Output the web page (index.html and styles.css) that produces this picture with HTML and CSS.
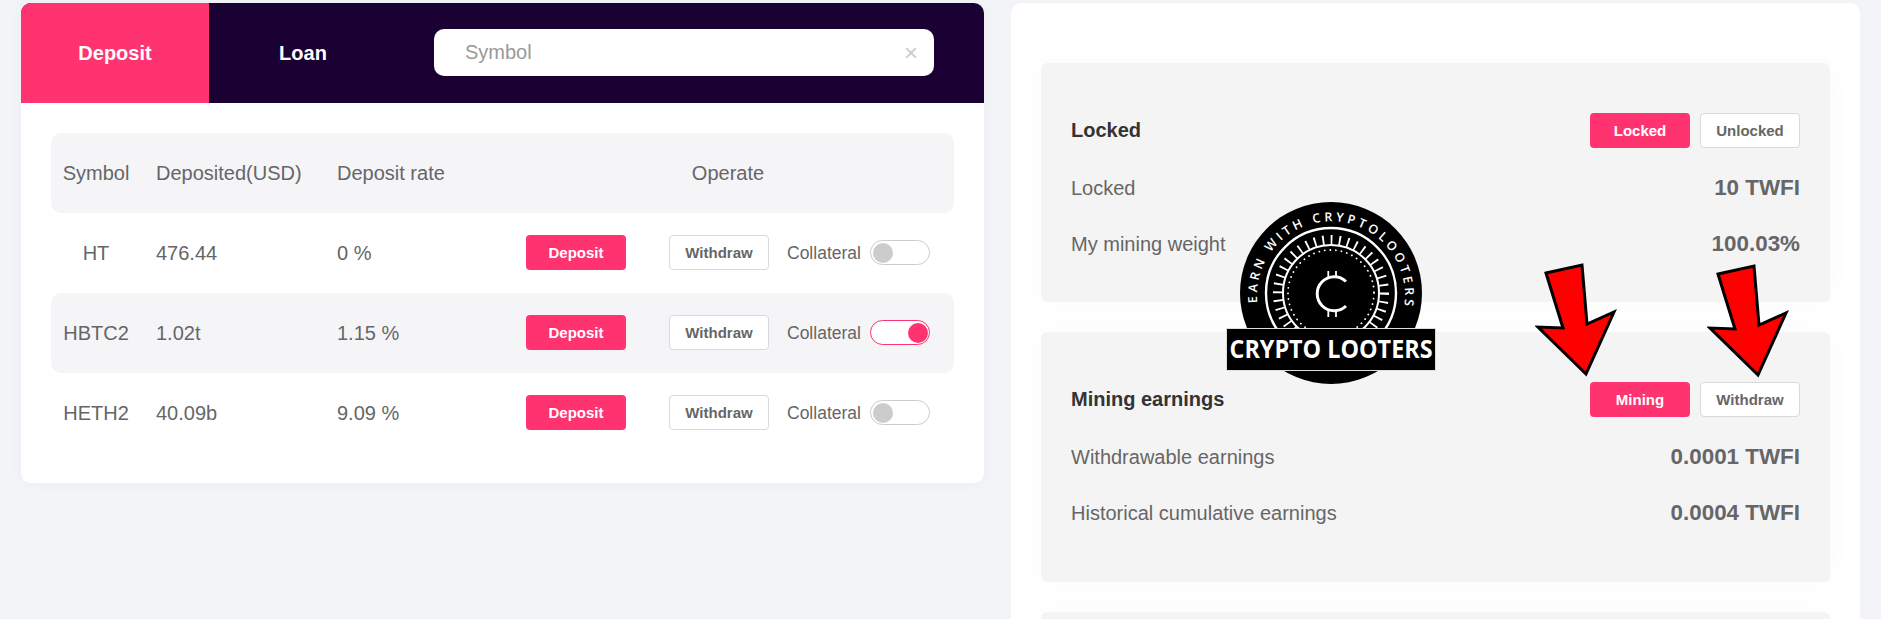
FILE: index.html
```html
<!DOCTYPE html>
<html lang="en">
<head>
<meta charset="utf-8">
<title>Deposit</title>
<link rel="stylesheet" href="styles.css">
</head>
<body>
<div class="page">
  <section class="market">
    <header class="market-head">
      <div class="tab tab-active">Deposit</div>
      <div class="tab">Loan</div>
      <div class="search"><span class="search-text">Symbol</span><span class="search-clear">×</span></div>
    </header>
    <div class="table">
      <div class="row row-shade row-head">
        <div class="cell-symbol">Symbol</div><div>Deposited(USD)</div><div>Deposit rate</div><div class="cell-operate">Operate</div>
      </div>
      <div class="row">
        <div class="cell-symbol">HT</div><div>476.44</div><div>0 %</div>
        <div class="ops"><button class="btn btn-pink">Deposit</button><button class="btn btn-white btn-gap">Withdraw</button><span class="coll">Collateral</span><span class="toggle"><span class="knob"></span></span></div>
      </div>
      <div class="row row-shade">
        <div class="cell-symbol">HBTC2</div><div>1.02t</div><div>1.15 %</div>
        <div class="ops"><button class="btn btn-pink">Deposit</button><button class="btn btn-white btn-gap">Withdraw</button><span class="coll">Collateral</span><span class="toggle toggle-on"><span class="knob"></span></span></div>
      </div>
      <div class="row">
        <div class="cell-symbol">HETH2</div><div>40.09b</div><div>9.09 %</div>
        <div class="ops"><button class="btn btn-pink">Deposit</button><button class="btn btn-white btn-gap">Withdraw</button><span class="coll">Collateral</span><span class="toggle"><span class="knob"></span></span></div>
      </div>
    </div>
  </section>

  <section class="side">
    <div class="panel panel-locked">
      <div class="panel-head"><h2 class="panel-title">Locked</h2><div class="panel-btns"><button class="btn btn-pink">Locked</button><button class="btn btn-white">Unlocked</button></div></div>
      <div class="stat"><span>Locked</span><b>10 TWFI</b></div>
      <div class="stat"><span>My mining weight</span><b>100.03%</b></div>
    </div>
    <div class="panel panel-earn">
      <div class="panel-head"><h2 class="panel-title">Mining earnings</h2><div class="panel-btns"><button class="btn btn-pink">Mining</button><button class="btn btn-white">Withdraw</button></div></div>
      <div class="stat"><span>Withdrawable earnings</span><b>0.0001 TWFI</b></div>
      <div class="stat"><span>Historical cumulative earnings</span><b>0.0004 TWFI</b></div>
    </div>
    <div class="panel panel-next"></div>
  </section>

  <svg class="logo" width="212" height="186" viewBox="0 0 212 186">
    <defs><path id="logo-arc" d="M31.4 101 A74 74 0 1 1 178.6 101"/></defs>
    <circle cx="105" cy="91" r="91" fill="#000"/>
    <text class="logo-arc-text"><textPath href="#logo-arc" textLength="250" lengthAdjust="spacing">EARN WITH CRYPTOLOOTERS</textPath></text>
    <circle cx="105" cy="91" r="65" fill="none" stroke="#fff" stroke-width="2.4"/>
    <circle cx="105" cy="91" r="48" fill="none" stroke="#fff" stroke-width="2"/>
    <circle cx="105" cy="91" r="53" fill="none" stroke="#fff" stroke-width="10" stroke-dasharray="1.8 6.5"/>
    <circle cx="105" cy="91" r="43" fill="none" stroke="#fff" stroke-width="1.8" stroke-linecap="round" stroke-dasharray="0.1 5.5"/>
    <path d="M120 79.5 A17 17 0 1 0 120 104" fill="none" stroke="#fff" stroke-width="3"/>
    <path d="M102.3 69 V76 M110 69 V76 M102.3 108 V115 M110 108 V115" stroke="#fff" stroke-width="1.8" fill="none"/>
    <rect x="0.5" y="126.5" width="209" height="42" fill="#000" stroke="#ddd"/>
    <text class="logo-name" x="105" y="156" text-anchor="middle" textLength="203" lengthAdjust="spacingAndGlyphs">CRYPTO LOOTERS</text>
  </svg>

  <svg class="arrow arrow-a" width="84" height="118" viewBox="0 0 84 118"><polygon points="11,14 47,6 52,65 79,53 51,115 3,68 28,69" fill="#f00" stroke="#000" stroke-width="3" stroke-linejoin="miter"/></svg>
  <svg class="arrow arrow-b" width="84" height="118" viewBox="0 0 84 118"><polygon points="11,14 47,6 52,65 79,53 51,115 3,68 28,69" fill="#f00" stroke="#000" stroke-width="3" stroke-linejoin="miter"/></svg>
</div>
</body>
</html>
```

FILE: styles.css
```css
* { box-sizing: border-box; }
html, body { margin: 0; height: 619px; overflow: hidden; }
body { background: #f3f4f7; font-family: "Liberation Sans", Arial, sans-serif; color: #666; font-size: 20px; }
.page { position: relative; display: flex; align-items: flex-start; gap: 27px; padding: 3px 0 0 21px; }

.market { width: 963px; height: 480px; flex: none; background: #fff; border-radius: 10px; overflow: hidden; box-shadow: 0 0 20px rgba(0,0,0,.03); }
.market-head { display: flex; align-items: center; height: 100px; background: #1b0033; }
.tab { width: 188px; height: 100px; display: flex; align-items: center; justify-content: center; color: #fff; font-weight: 700; }
.tab-active { background: #ff3370; }
.search { width: 500px; height: 47px; margin-left: 37px; margin-bottom: 1px; padding: 0 16px 0 31px; display: flex; align-items: center; justify-content: space-between; background: #fff; border-radius: 10px; }
.search-text { color: #999; }
.search-clear { color: #ccc; font-size: 24px; line-height: 1; }

.table { margin: 30px 30px 0; }
.row { display: grid; grid-template-columns: 105px 181px 189px 404px; height: 80px; align-items: center; border-radius: 10px; padding-right: 24px; }
.row-shade { background: #f5f5f8; }
.cell-symbol { padding-right: 15px; text-align: center; }
.cell-operate { text-align: center; }
.ops { display: flex; align-items: center; margin-bottom: 1px; }

.btn { width: 100px; height: 35px; padding: 0; border-radius: 4px; font: 700 15px "Liberation Sans", Arial, sans-serif; cursor: pointer; }
.btn-pink { background: #ff3370; border: 0; color: #fff; }
.btn-white { background: #fff; border: 1px solid #d9d9d9; color: #666; }
.btn-gap { margin-left: 43px; }
.coll { margin: 2px 0 0 18px; width: 83px; flex: none; font-size: 17.5px; white-space: nowrap; }
.toggle { width: 60px; height: 25px; flex: none; display: flex; align-items: center; padding: 0 2px; background: #fff; border: 1px solid #ccc; border-radius: 13px; }
.knob { width: 20px; height: 20px; border-radius: 50%; background: #ccc; }
.toggle-on { justify-content: flex-end; padding-right: 1px; border-color: #ff3370; }
.toggle-on .knob { background: #ff3370; }

.side { width: 849px; height: 800px; flex: none; padding: 60px 30px 0; background: #fff; border-radius: 10px; }
.panel { background: #f4f4f5; border-radius: 6px; padding: 50px 30px 0; margin-bottom: 30px; box-shadow: 0 0 30px rgba(0,0,0,.025); }
.panel-locked { height: 239px; }
.panel-earn { height: 250px; }
.panel-next { height: 100px; }
.panel-head { display: flex; justify-content: space-between; align-items: center; height: 35px; margin-bottom: 20px; }
.panel-title { margin: 0; color: #333; font-size: 20px; font-weight: 700; }
.panel-btns { display: flex; gap: 10px; }
.stat { display: flex; justify-content: space-between; align-items: center; height: 40px; margin-bottom: 16px; }
.stat b { font-size: 22.4px; }

.logo { position: absolute; left: 1226px; top: 202px; }
.logo-arc-text { font: 600 12.5px "Open Sans", sans-serif; fill: #fff; }
.logo-name { font: 700 25px "Open Sans", sans-serif; fill: #fff; }
.arrow { position: absolute; top: 259px; }
.arrow-a { left: 1535px; }
.arrow-b { left: 1707px; top: 260px; }
```
